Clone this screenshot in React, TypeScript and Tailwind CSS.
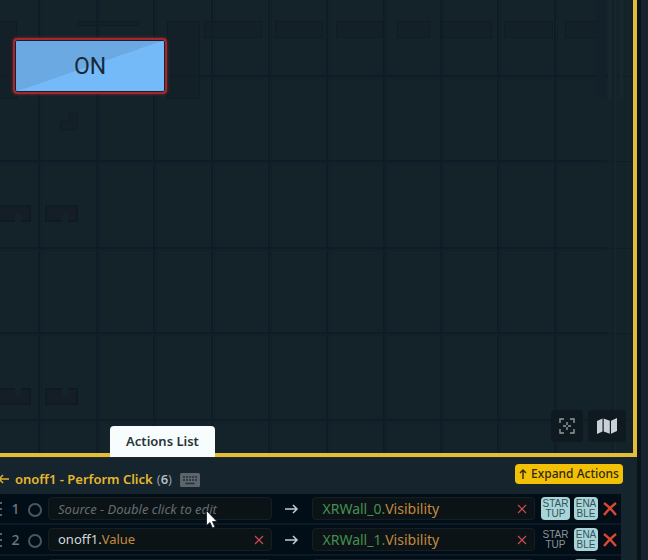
/**
 * Scene editor: canvas preview on top, actions list for the selected widget below.
 */
import { useState } from 'react'

type Action = {
  id: number
  source?: [string, string]
  hint?: string
  target: [string, string]
  startup: boolean
  enabled: boolean
}

const ACTIONS: Action[] = [
  { id: 1, hint: 'Source - Double click to edit', target: ['XRWall_0.', 'Visibility'], startup: true, enabled: true },
  { id: 2, source: ['onoff1.', 'Value'], target: ['XRWall_1.', 'Visibility'], startup: false, enabled: true },
]

const GRID_X = [39, 97, 154, 212, 269, 327, 384, 441, 498, 555]
const GRID_Y = [76, 161, 248, 333, 420]

// [x, y, width, height] of the faint shapes behind the widgets
const GHOSTS = [
  [-4, 21, 20, 77],
  [78, 21, 60, 4],
  [167, 21, 32, 77],
  [204, 21, 57, 16],
  [275, 21, 47, 16],
  [336, 21, 46, 16],
  [397, 21, 32, 16],
  [442, 21, 49, 16],
  [504, 21, 48, 16],
  [565, 21, 32, 16],
]

const BLOCKS = [
  [-2, 205],
  [45, 205],
  [-2, 388],
  [45, 388],
]

function Backdrop() {
  return (
    <svg className="absolute inset-0 h-full w-full" aria-hidden="true">
      {GRID_X.map((x) => (
        <g key={x}>
          <rect x={x - 1} y="0" width="2" height="100%" fill="#0d1c26" />
          <rect x={x + 2} y="0" width="1" height="100%" fill="#101e28" />
        </g>
      ))}
      {GRID_Y.map((y) => (
        <g key={y}>
          <rect x="0" y={y - 1} width="607" height="2" fill="#0d1c26" />
          <rect x="0" y={y + 2} width="607" height="1" fill="#101f29" />
          <rect x="607" y={y} width="26" height="1" fill="#101d26" />
        </g>
      ))}
      {GHOSTS.map(([x, y, w, h]) => (
        <rect key={x} x={x + 0.5} y={y + 0.5} width={w} height={h} fill="#131f27" fillOpacity="0.6" stroke="#0f1c25" />
      ))}
      {BLOCKS.map(([x, y]) => (
        <g key={`${x}-${y}`}>
          <rect x={x + 1} y={y + 1} width="31" height="15" fill="#151e26" stroke="#0f1b24" strokeWidth="2" />
          <rect x={x + 17} y={y > 300 ? y : y + 9} width="6" height="8" fill="#14222b" />
        </g>
      ))}
      <path d="M61 121h8v-8h8v17h-17z" fill="#151f27" stroke="#101c25" />
      <rect x="596" y="0" width="9" height="98" fill="#12202a" />
      <rect x="608" y="0" width="4" height="98" fill="#17252e" />
      <rect x="612" y="0" width="1" height="100%" fill="#101e27" />
      <rect x="615" y="0" width="1" height="100%" fill="#18262e" />
      <rect x="620" y="0" width="3" height="98" fill="#18262e" />
      <rect x="628" y="0" width="1" height="100%" fill="#15242e" />
    </svg>
  )
}

function ArrowRight() {
  return (
    <svg className="w-10 shrink-0 text-[#c3ccd0]" height="14" viewBox="0 0 40 14" fill="none" stroke="currentColor" strokeWidth="1.5" aria-hidden="true">
      <path d="M13 7h12M21 3l4 4-4 4" />
    </svg>
  )
}

function ClearButton({ label }: { label: string }) {
  return (
    <button type="button" aria-label={label} className="ml-auto shrink-0 text-[#c94a50]">
      <svg width="10" height="10" viewBox="0 0 10 10" fill="none" stroke="currentColor" strokeWidth="1.2">
        <path d="M1 1l8 8M9 1L1 9" />
      </svg>
    </button>
  )
}

const rowClass = 'flex h-[31px] items-center border-b-2 border-[#0b1a24] bg-[#020e17] pr-[3px]'
const fieldClass = 'flex h-[23px] min-w-0 flex-1 items-center rounded-sm border border-[#131f25] bg-[#0b1317] pl-[9px] pr-[7px]'

function Toggle({ on, top, bottom, className, onClick }: { on: boolean; top: string; bottom: string; className: string; onClick: () => void }) {
  return (
    <button
      type="button"
      aria-pressed={on}
      onClick={onClick}
      className={`flex h-[23px] shrink-0 flex-col items-center justify-center rounded font-['Liberation_Sans',sans-serif] text-[10px] leading-[10px] ${on ? 'bg-[#a9d5d9] text-[#34535b]' : 'text-[#8b9397]'} ${className}`}
    >
      <span>{top}</span>
      <span>{bottom}</span>
    </button>
  )
}

function ActionRow({ action }: { action: Action }) {
  const [startup, setStartup] = useState(action.startup)
  const [enabled, setEnabled] = useState(action.enabled)

  return (
    <li className={rowClass}>
      <svg className="shrink-0 text-[#596369]" width="3" height="14" viewBox="0 0 3 14" fill="currentColor" aria-hidden="true">
        <path d="M0 0h2v2H0zM0 6h2v2H0zM0 12h2v2H0z" />
      </svg>
      <span className="w-[25px] shrink-0 text-center text-[14px] font-medium text-[#6f797e]">{action.id}</span>
      <input
        type="radio"
        name="current"
        aria-label={`Select action ${action.id}`}
        className="mr-[6px] mt-[3px] h-[14px] w-[14px] shrink-0 appearance-none rounded-full border-2 border-[#4b565d]"
      />

      {action.hint ? (
        <input
          type="text"
          aria-label="Source"
          placeholder={action.hint}
          className={`${fieldClass} text-[13px] italic text-[#d8dee0] outline-none placeholder:text-[#666d6f]`}
        />
      ) : (
        <div className={`${fieldClass} text-[13px]`}>
          {action.source && (
            <>
              <span className="text-[#d0d9dc]">{action.source[0]}</span>
              <span className="text-[#c48a3c]">{action.source[1]}</span>
              <ClearButton label="Clear source" />
            </>
          )}
        </div>
      )}
      <ArrowRight />
      <div className={`${fieldClass} text-[14px]`}>
        <span className="pl-px text-[#459050]">{action.target[0]}</span>
        <span className="text-[#c48a3c]">{action.target[1]}</span>
        <ClearButton label="Clear target" />
      </div>

      <Toggle on={startup} top="STAR" bottom="TUP" className="ml-[6px] w-[29px]" onClick={() => setStartup(!startup)} />
      <Toggle on={enabled} top="ENA" bottom="BLE" className="ml-1 w-6" onClick={() => setEnabled(!enabled)} />
      <button type="button" aria-label="Delete action" className="ml-1 shrink-0 text-[#dc4732]">
        <svg width="16" height="16" viewBox="0 0 16 16" fill="none" stroke="currentColor" strokeWidth="2.4">
          <path d="M2 2c4 3 8 7 12 12M14 2C9 6 5 10 2 14" />
        </svg>
      </button>
    </li>
  )
}

// Placeholder for the next action while the list is collapsed
function CollapsedRow() {
  return (
    <li className={rowClass} aria-hidden="true">
      <div className={`${fieldClass} ml-12`} />
      <div className="w-10 shrink-0" />
      <div className={fieldClass} />
      <div className="ml-[39px] mr-5 h-[23px] w-6 shrink-0 rounded bg-[#7b989d]" />
    </li>
  )
}

function Canvas() {
  return (
    <main className="relative min-h-0 flex-1 border-b-4 border-r-4 border-[#e3bd39] bg-[#14222a]">
      <Backdrop />
      <button
        type="button"
        className="absolute left-[13px] top-[38px] h-14 w-[154px] rounded border-2 border-[#a1282e] bg-[linear-gradient(to_bottom_right,#6ba9e2_50%,#74b9f8_50%)] pt-[2px] font-['Roboto',sans-serif] text-[23px] text-[#182a38] shadow-[0_0_3px_#a1282e,inset_0_0_0_1px_#19202d]"
      >
        ON
      </button>

      <div className="absolute bottom-[11px] right-[7px] flex gap-[5px]">
        <button type="button" aria-label="Center view" className="flex h-8 w-8 items-center justify-center rounded bg-[#0e1920] text-[#929a9e]">
          <svg width="16" height="16" viewBox="0 0 16 16" fill="none" stroke="currentColor" strokeWidth="1.4">
            <path d="M1 5V1h4M11 1h4v4M15 11v4h-4M5 15H1v-4M8 4v3M8 9v3M4 8h3M9 8h3" />
          </svg>
        </button>
        <button type="button" aria-label="Map" className="flex h-8 w-[38px] items-center justify-center rounded bg-[#0e1920] text-[#c9d0d8]">
          <svg width="20" height="16" viewBox="0 0 20 16" fill="currentColor">
            <path d="M0 3l5.500-2.500v13L0 16zM6.700.5l6.100 2.200v13l-6.100-2.200zM14 2.700L20 0v13l-6 2.700z" />
          </svg>
        </button>
      </div>

      <button
        type="button"
        className="absolute -bottom-1 left-[110px] h-[31px] w-[105px] rounded-t bg-[#f7fcfc] text-[13px] font-semibold text-[#26343a]"
      >
        Actions List
      </button>
    </main>
  )
}

export default function App() {
  return (
    <div className="flex h-screen overflow-hidden bg-[#14232c] font-['Noto_Sans',sans-serif]">
      <div className="flex min-w-0 flex-1 flex-col">
        <Canvas />

        <section className="relative h-[103px] shrink-0 overflow-hidden bg-[#16242d] pr-4" aria-label="Actions">
          <header className="flex h-[37px] items-center border-t border-[#262819]">
            <button type="button" aria-label="Back" className="mt-[6px] text-[#dfb32c]">
              <svg width="10" height="10" viewBox="0 0 10 10" fill="none" stroke="currentColor" strokeWidth="1.5">
                <path d="M9 5H0M3 1L-1 5l4 4" />
              </svg>
            </button>
            <h2 className="ml-[5px] mt-2 text-[13px] font-semibold text-[#e5b82e]">onoff1 - Perform Click</h2>
            <span className="ml-1 mt-2 text-[13px] text-[#8e999e]">
              (<b className="font-semibold text-[#b3bdc2]">6</b>)
            </span>
            <svg className="ml-2 mt-2 shrink-0" width="20" height="14" viewBox="0 0 20 14" aria-hidden="true">
              <rect width="20" height="14" rx="1.500" fill="#5c656b" />
              <path d="M3 4h14M3 7h14" stroke="#242f37" strokeWidth="1.500" strokeDasharray="2 1" />
              <path d="M5.500 10.500h9" stroke="#242f37" strokeWidth="1.500" />
            </svg>
            <button
              type="button"
              className="-mr-[2px] mb-1 ml-auto flex h-5 w-[108px] shrink-0 items-center justify-center gap-1 rounded bg-[#f2c106] text-[12px] font-medium text-[#302911]"
            >
              <svg width="8" height="10" viewBox="0 0 8 10" fill="none" stroke="currentColor" strokeWidth="1.400" aria-hidden="true">
                <path d="M4 10V1M1 4l3-3 3 3" />
              </svg>
              Expand Actions
            </button>
          </header>

          <ul>
            {ACTIONS.map((action) => (
              <ActionRow key={action.id} action={action} />
            ))}
            <CollapsedRow />
          </ul>

          {/* mouse pointer */}
          <svg className="pointer-events-none absolute left-[206px] top-[53px]" width="12" height="19" viewBox="0 0 12 19" aria-hidden="true">
            <path d="M.5.500v15l3.500-3 2.500 5.500 2.500-1-2.500-5.500h4.500z" fill="#fff" stroke="#10181c" strokeWidth=".8" />
          </svg>
        </section>
      </div>
      <aside className="w-[11px] shrink-0 border-l-4 border-[#0a1317] bg-[#15242e]" />
    </div>
  )
}
